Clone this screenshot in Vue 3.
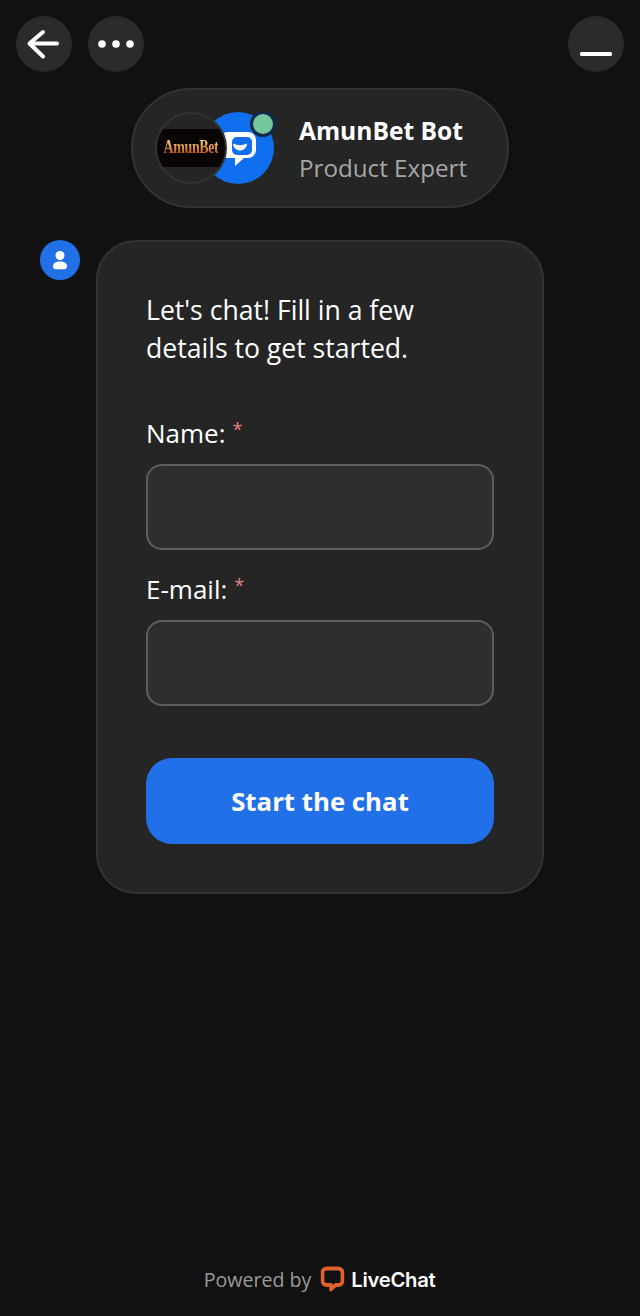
<script setup>
const fields = [
  { label: 'Name:', id: 'name' },
  { label: 'E-mail:', id: 'email' }
]
</script>

<template>
  <div class="page">
    <div class="topbar">
      <div class="group">
        <button class="round" aria-label="Back">
          <svg width="56" height="56" viewBox="0 0 56 56" fill="none" stroke="#fff" stroke-width="4" stroke-linecap="round" stroke-linejoin="round">
            <path d="M27 16 L13.500 27.500 L27 40.500" />
            <path d="M14 27.500 H41" />
          </svg>
        </button>
        <button class="round" aria-label="Menu">
          <svg width="56" height="56" viewBox="0 0 56 56" fill="#fff">
            <circle cx="14" cy="28" r="3.800" />
            <circle cx="28" cy="28" r="3.800" />
            <circle cx="42" cy="28" r="3.800" />
          </svg>
        </button>
      </div>
      <button class="round" aria-label="Minimize">
        <svg width="56" height="56" viewBox="0 0 56 56" fill="#fff">
          <rect x="12" y="36" width="32" height="4" rx="1.500" />
        </svg>
      </button>
    </div>

    <div class="pill-wrap">
      <div class="pill">
        <div class="avatars">
          <div class="av-blue">
            <svg width="72" height="72" viewBox="0 0 72 72">
              <path d="M26 20 H46 a8 8 0 0 1 8 8 V38 a8 8 0 0 1 -8 8 H42 L33 54 V46 H26 a8 8 0 0 1 -8 -8 V28 a8 8 0 0 1 8 -8 Z" fill="#fff" />
              <rect x="30" y="25" width="20" height="18" rx="5" fill="#0f6fef" />
              <path d="M31 31.500 C36 33.500 40 33.500 45 31.500 C45 36 41 38.500 38 38.500 C35 38.500 31 36 31 31.500 Z" fill="#fff" />
            </svg>
            <span class="online"></span>
          </div>
          <div class="av-logo">
            <div class="logo-strip"><span>AmunBet</span></div>
          </div>
        </div>
        <div class="who">
          <div class="who-name">AmunBet Bot</div>
          <div class="who-role">Product Expert</div>
        </div>
      </div>
    </div>

    <div class="message">
      <div class="bot-dot">
        <svg width="40" height="40" viewBox="0 0 40 40" fill="#fff">
          <circle cx="20" cy="15.500" r="4.500" />
          <path d="M13 26 C13 23 16 21.500 20 21.500 C24 21.500 27 23 27 26 C27 28 26 29.300 24.500 29.300 H15.500 C14 29.300 13 28 13 26 Z" />
        </svg>
      </div>
      <div class="card">
        <p class="intro">Let's chat! Fill in a few<br />details to get started.</p>
        <form class="form" @submit.prevent>
          <div v-for="f in fields" :key="f.id" class="field">
            <label :for="f.id" class="label">{{ f.label }}<span class="req">*</span></label>
            <input :id="f.id" class="input" type="text" />
          </div>
          <button class="submit" type="submit">Start the chat</button>
        </form>
      </div>
    </div>

    <div class="footer">
      <span class="powered">Powered by</span>
      <svg class="lc" width="24" height="26" viewBox="0 0 24 26" fill="none">
        <path d="M6 2.500 H18 a4 4 0 0 1 4 4 V15 a4 4 0 0 1 -4 4 H15 L10.500 23.500 V19 H6 a4 4 0 0 1 -4 -4 V6.500 a4 4 0 0 1 4 -4 Z" stroke="#e0602c" stroke-width="3.800" stroke-linejoin="round" />
      </svg>
      <span class="brand">LiveChat</span>
    </div>
  </div>
</template>

<style>
html, body { margin: 0; background: #111111; }
</style>

<style scoped>
.page {
  width: 640px;
  height: 1316px;
  background: #111111;
  display: flex;
  flex-direction: column;
  font-family: "Open Sans", "Noto Sans", sans-serif;
  color: #fff;
  box-sizing: border-box;
  overflow: hidden;
}
.topbar {
  display: flex;
  justify-content: space-between;
  padding: 16px 16px 0;
}
.group { display: flex; gap: 16px; }
.round {
  width: 56px;
  height: 56px;
  padding: 0;
  border: 0;
  border-radius: 50%;
  background: #2b2b2b;
  display: block;
}
.round svg { display: block; }
.pill-wrap {
  display: flex;
  justify-content: center;
  margin-top: 16px;
}
.pill {
  width: 378px;
  height: 120px;
  box-sizing: border-box;
  border: 2px solid #333333;
  border-radius: 60px;
  background: #252525;
  display: flex;
  align-items: center;
  padding-left: 22px;
}
.avatars {
  position: relative;
  width: 120px;
  height: 72px;
  flex: none;
}
.av-blue {
  position: absolute;
  left: 47px;
  top: 0;
  width: 72px;
  height: 72px;
  border-radius: 50%;
  background: #0f6fef;
}
.av-blue svg { display: block; }
.online {
  position: absolute;
  left: 48px;
  top: -1px;
  width: 20px;
  height: 20px;
  border-radius: 50%;
  background: #74c69d;
  border: 3px solid #10294a;
}
.av-logo {
  position: absolute;
  left: 0;
  top: 0;
  width: 72px;
  height: 72px;
  box-sizing: border-box;
  border-radius: 50%;
  background: #252525;
  border: 2px solid #333333;
  display: flex;
  align-items: center;
  overflow: hidden;
}
.logo-strip {
  width: 100%;
  height: 38px;
  background: #0a0505;
  display: flex;
  align-items: center;
  justify-content: center;
}
.logo-strip span {
  font-family: "Liberation Serif", serif;
  font-weight: 700;
  font-size: 14px;
  letter-spacing: -0.400px;
  white-space: nowrap;
  background: linear-gradient(180deg, #eebf6a 25%, #d9762a 60%, #a8401c 90%);
  -webkit-background-clip: text;
  background-clip: text;
  color: transparent;
  transform: scaleY(1.300);
}
.who { margin-left: 24px; margin-top: 2px; }
.who-name {
  font-size: 24.600px;
  line-height: 38px;
  font-weight: 700;
  color: #fff;
}
.who-role {
  margin-top: -1px;
  font-size: 24.200px;
  line-height: 38px;
  color: #a6a6a6;
}
.message {
  display: flex;
  align-items: flex-start;
  margin-top: 32px;
  padding-left: 40px;
  gap: 16px;
}
.bot-dot {
  width: 40px;
  height: 40px;
  border-radius: 50%;
  background: #2270e8;
  flex: none;
}
.bot-dot svg { display: block; }
.card {
  width: 448px;
  height: 654px;
  box-sizing: border-box;
  border: 2px solid #333333;
  border-radius: 40px;
  background: #252525;
  padding: 49px 48px 0;
}
.intro {
  margin: 0;
  font-size: 26.600px;
  line-height: 38px;
  color: #fff;
}
.form { margin-top: 47px; }
.field { margin-bottom: 20px; }
.label {
  display: block;
  font-size: 26px;
  line-height: 38px;
  margin-bottom: 12px;
  color: #fff;
}
.req {
  color: #e5807a;
  font-size: 18px;
  line-height: 0;
  margin-left: 7px;
  position: relative;
  top: -7px;
}
.input {
  display: block;
  width: 100%;
  height: 86px;
  box-sizing: border-box;
  border: 2px solid #5e5e5e;
  border-radius: 16px;
  background: #2e2e2e;
  outline: none;
}
.submit {
  display: block;
  width: 100%;
  height: 86px;
  margin-top: 52px;
  border: 0;
  border-radius: 26px;
  background: #2270e8;
  color: #fff;
  font-family: inherit;
  font-size: 25.800px;
  font-weight: 700;
}
.footer {
  margin-top: auto;
  margin-bottom: 23px;
  height: 28px;
  display: flex;
  align-items: center;
  justify-content: center;
  gap: 9px;
  transform: translateX(-0.500px);
}
.powered { font-size: 19.600px; color: #9a9a9a; }
.brand {
  font-family: Inter, sans-serif;
  font-size: 20.300px;
  font-weight: 600;
  letter-spacing: -0.300px;
  color: #fff;
  margin-left: -2px;
}
.lc { flex: none; }
</style>
